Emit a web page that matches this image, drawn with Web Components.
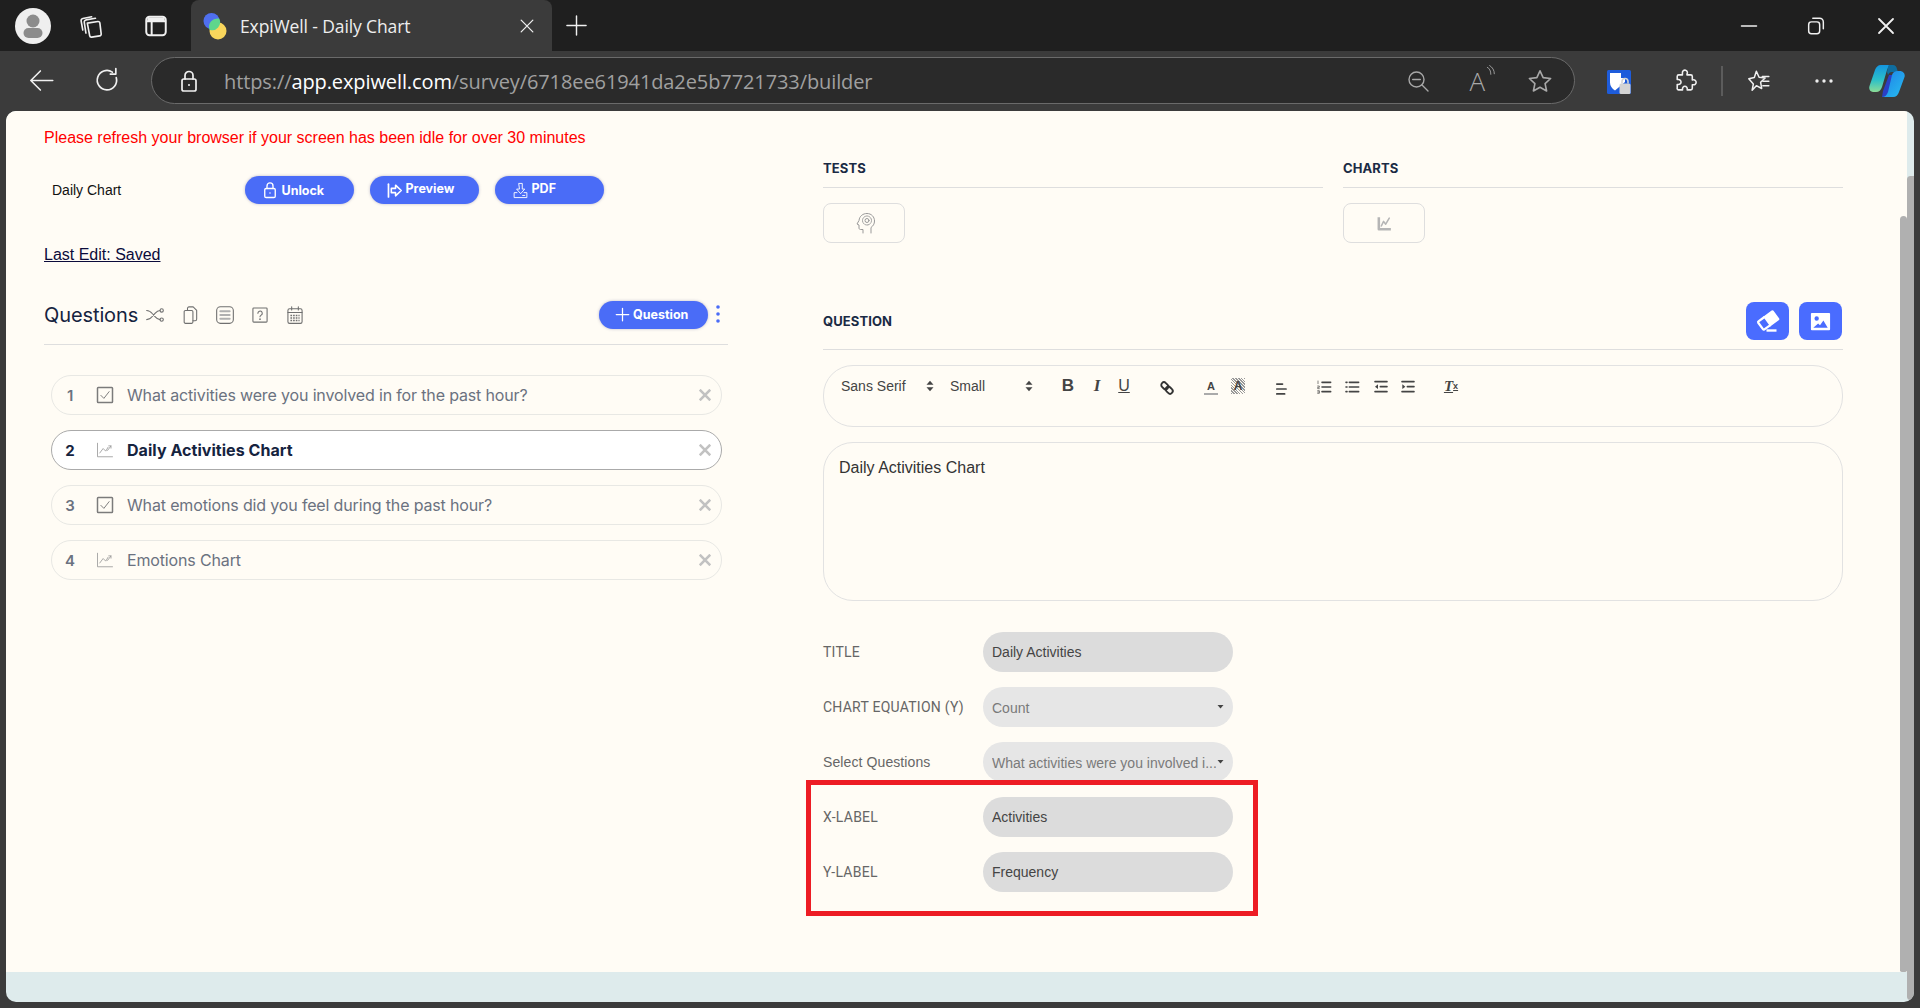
<!DOCTYPE html>
<html lang="en">
<head>
<meta charset="utf-8">
<title>ExpiWell - Daily Chart</title>
<style>
  html, body { margin: 0; height: 1008px; overflow: hidden; background: #3b3b3b; }
  body { display: flex; flex-direction: column; font-family: "Liberation Sans", sans-serif; }
</style>
</head>
<body>
<tab-strip></tab-strip>
<nav-bar></nav-bar>
<page-panel></page-panel>

<script>
const ICONS = {
  workspaces: '<path d="M8.6 9.3 18.4 7.9a1.6 1.6 0 0 1 1.8 1.4l1.2 10a1.6 1.6 0 0 1-1.4 1.8l-7.4 1.2a1.6 1.6 0 0 1-1.8-1.3z"/><path d="M7.3 18.5 5.8 8.6a2 2 0 0 1 1.7-2.3l8.6-1.4"/><path d="M4.4 15.7 2.9 7.4a2 2 0 0 1 1.6-2.3l8.1-1.6"/>',
  sidebar: '<rect x="3" y="3.5" width="18" height="17" rx="3"/><path d="M3.5 7.7h17M8 8v12"/><rect x="4" y="4.2" width="16" height="3.4" rx="1" fill="currentColor" stroke="none"/>',
  close: '<path d="M5 5l14 14M19 5 5 19"/>',
  plus: '<path d="M12 2v20M2 12h20"/>',
  back: '<path d="M22 12H2.500M11 3.500 2.500 12l8.500 8.500"/>',
  refresh: '<path d="M19.800 9.500A8.600 8.600 0 1 1 16.300 4.600"/><path d="M19.400 1.400V6.300H14.500"/>',
  lockopen: '<rect x="5" y="10" width="14" height="12" rx="1.800"/><path d="M8 10V6.500a4 4 0 0 1 8 0V10"/><circle cx="12" cy="16" r="1" fill="currentColor" stroke="none"/>',
  zoomout: '<circle cx="10.500" cy="10.500" r="7.500"/><path d="M6.700 10.500h7.600M16 16l6 6"/>',
  star: '<path d="M12 2.600l2.900 6.300 6.900.8-5.100 4.700 1.400 6.800-6.100-3.400-6.100 3.400 1.400-6.800L2.200 9.700l6.900-.8z"/>',
  puzzle: '<path d="M10 4.600a2.400 2.400 0 1 1 4.400 1.200V6.600H18a1.500 1.500 0 0 1 1.500 1.500v3.300h.6a2.400 2.400 0 1 1 0 4.600h-.6v3.500a1.500 1.500 0 0 1-1.500 1.500h-3.400v-.7a2.300 2.300 0 1 0-4.500 0v.7H6.500A1.500 1.500 0 0 1 5 19v-3.200h.8a2.400 2.400 0 1 0 0-4.700H5V8.100a1.500 1.500 0 0 1 1.500-1.500H10z"/>',
  favstar: '<path d="M10.500 3l2.500 5.500 5.600.7-4.200 3.900 1 5.800-4.900-2.600-3.900 4.200 1.100-5.700L3.500 10l5.100-1.300z"/><path d="M16 7.800h6M16.500 12.200h5.500M16.500 16.400h5.500"/>',
  minimize: '<path d="M3 12h18"/>',
  restore: '<rect x="4" y="7.500" width="12" height="13" rx="3"/><path d="M8.500 3.600h7.500a4 4 0 0 1 4 4V15"/>',
  shuffle: '<path d="M2 6.500c3 0 5 1.500 7 4l3 3.500c2 2.300 4 3.500 6 3.500M2 17.500c3 0 5-1.500 7-4l3-3.500c2-2.300 4-3.500 6-3.500"/><circle cx="20" cy="6.500" r="2"/><circle cx="20" cy="17.500" r="2"/>',
  copy: '<rect x="5" y="6.500" width="10.500" height="15.500" rx="1.500"/><path d="M9 6.500V4a1.800 1.800 0 0 1 1.800-1.800h5L20 6.400V17a1.800 1.800 0 0 1-1.800 1.800h-2.700"/>',
  doclines: '<rect x="2" y="2" width="20" height="20" rx="4.500"/><path d="M6.500 7.500h11M6.500 12h11M6.500 16.500h11" stroke="#b0b0b0" stroke-width="2.600"/>',
  helpbox: '<rect x="3.500" y="3.500" width="17" height="17" rx="1"/><path d="M9.500 10a2.600 2.600 0 1 1 4 2.100c-1 .7-1.500 1-1.500 2"/><circle cx="12" cy="17" r="1" fill="currentColor" stroke="none"/>',
  calendar: '<rect x="3.500" y="4.500" width="17" height="17.500" rx="2"/><path d="M3.500 9h17M8 2v4M16 2v4"/><path d="M6.500 12.500h11M6.500 15.500h11M6.500 18.500h11" stroke-dasharray="2 1.200" stroke-width="1.800" stroke-linecap="butt"/>',
  checkbox: '<rect x="2" y="2" width="20" height="20" rx="1" stroke-width="2"/><path d="M6.500 12.500 10.500 16.500 17.500 7.500" stroke-width="1.300"/>',
  linechart: '<path d="M2 3v18h20" stroke-width="1.100"/><path d="M5 16l4.500-6 3.500 3.500 3-5" stroke-width="1.100"/><path d="M17 6.500l3 0 0 3M20 6.500l-4.500 6" stroke-width="1.100"/>',
  chartfill: '<path d="M4 3v17h17" stroke-width="3.600" stroke-linecap="butt"/><path d="M7.500 15.500l3.200-6.500 3 4 5-8.500" stroke-width="2.200"/>',
  head: '<path d="M9 22v-3.500H6.500c-1 0-1.500-.7-1.500-1.500v-3l-2-1 2-3.500C5.500 5 9 2.500 13 2.500c4.500 0 7.500 3.500 7.500 7.500 0 3-1.500 5-3.500 6.500V22"/><circle cx="13" cy="9.500" r="4.500" stroke-dasharray="1.500 1"/><circle cx="13" cy="9.500" r="2"/>',
  eraser: '<g transform="rotate(-36 12 11)"><path d="M10.500 6.500H3.500a1 1 0 0 0-1 1v8a1 1 0 0 0 1 1h7" stroke-width="2.200" fill="none"/><path d="M10 5.500h10.500a1.500 1.500 0 0 1 1.500 1.500v9a1.500 1.500 0 0 1-1.500 1.500H10z" fill="currentColor" stroke="none"/></g><path d="M10.500 21.500h10" stroke-width="2.400" stroke-linecap="butt"/>',
  image: '<path fill-rule="evenodd" d="M3 3h18a1 1 0 0 1 1 1v16a1 1 0 0 1-1 1H3a1 1 0 0 1-1-1V4a1 1 0 0 1 1-1zM8 6.500a2.300 2.300 0 1 0 0 4.600 2.300 2.300 0 0 0 0-4.600zM4.500 18.500h15l-4.500-7.500-3.500 5-2-2z" fill="currentColor" stroke="none"/>',
  shareto: '<path d="M3.500 3v18" stroke-width="2.400"/><path d="M7.500 9h6V4.500L21.500 12l-8 7.500V15h-6z" stroke-width="2.200"/>',
  download: '<path d="M10 2h4.500v8H18l-5.800 6.500L6.500 10H10z"/><path d="M7 15H3v7h18v-7h-4M15 19h3"/>',
  link: '<g transform="rotate(-45 12 12)"><rect x="8" y="1.500" width="8" height="11.500" rx="4" stroke-width="2.800"/><rect x="8" y="11" width="8" height="11.500" rx="4" stroke-width="2.800"/></g>',
  alignleft: '<path d="M4 5h8M4 12h13M4 19h11" stroke-width="2.400"/>',
  olist: '<path d="M9 5h13M9 12h13M9 19h13" stroke-width="2.400"/><path d="M3 3v4M2.500 10.500h2.500v2h-2.500v2h2.500M2.500 17.500h2.500v4h-2.500M2.500 19.500h2.500" stroke-width="1"/>',
  ulist: '<path d="M8 5h14M8 12h14M8 19h14M3 5h1.500M3 12h1.500M3 19h1.500" stroke-width="2.400"/>',
  outdent: '<path d="M3 4h18M11 11.500h10M3 19h18" stroke-width="2.400"/><path d="M3 11.500 7.500 8v7z" fill="currentColor" stroke="none"/>',
  indent: '<path d="M3 4h18M11 11.500h10M3 19h18" stroke-width="2.400"/><path d="M8 11.500 3.500 8v7z" fill="currentColor" stroke="none"/>',
  updown: '<path d="M12 3 18 10H6zM12 21 6 14h12z" fill="currentColor" stroke="none"/>',
  caret: '<path d="M4 8h16l-8 9z" fill="currentColor" stroke="none"/>',
  waves: '<path d="M4 4c4 2 6 6 6 12M8 1c5 3 8 8 8 14"/>'
};

class UiIcon extends HTMLElement {
  connectedCallback() {
    const size = this.getAttribute('size') || 24;
    const stroke = this.getAttribute('stroke') || 1.6;
    this.attachShadow({ mode: 'open' }).innerHTML = `
      <style>:host { display: inline-flex; width: ${size}px; height: ${size}px; flex: none; } svg { width: 100%; height: 100%; display: block; overflow: visible; }</style>
      <svg viewBox="0 0 24 24" fill="none" stroke="currentColor" stroke-width="${stroke}" stroke-linecap="round" stroke-linejoin="round">${ICONS[this.getAttribute('name')]}</svg>`;
  }
}

class TabStrip extends HTMLElement {
  connectedCallback() {
    this.attachShadow({ mode: 'open' }).innerHTML = `
      <style>
        :host { display: flex; align-items: center; height: 51px; flex: none; background: #1f1f1f; color: #f0f0f0; }
        .avatar { width: 36px; height: 36px; margin-left: 15px; }
        .workspace { margin-left: 27px; }
        .side { margin-left: 39px; }
        .tab { display: flex; align-items: center; align-self: flex-end; box-sizing: border-box; width: 361px; height: 51px; margin-left: 22px; background: #3b3b3b; border-radius: 8px 8px 0 0; padding-left: 12px; }
        .fav { width: 26px; height: 30px; }
        .title { margin-left: 11px; font: 17.5px "Open Sans", sans-serif; letter-spacing: -.12px; color: #eee; white-space: nowrap; flex: 1; }
        .tab ui-icon { margin-right: 15px; }
        .new { margin-left: 13px; }
        .spacer { flex: 1; }
        .win { margin-left: 47px; }
        .win.first { margin: 0 -1px 0 0; }
      </style>
      <svg class="avatar" viewBox="0 0 36 36"><circle cx="18" cy="18" r="18" fill="#efefef"/><circle cx="18" cy="13" r="6.500" fill="#8c8c8c"/><rect x="8.500" y="20" width="19" height="10" rx="5" fill="#8c8c8c"/></svg>
      <ui-icon class="workspace" name="workspaces" size="26" stroke="1.500"></ui-icon>
      <ui-icon class="side" name="sidebar" size="26" stroke="1.800"></ui-icon>
      <div class="tab">
        <svg class="fav" viewBox="0 0 26 30"><circle cx="8.500" cy="10" r="8" fill="#4f6fee"/><circle cx="15" cy="20" r="8.500" fill="#f9d65c"/><path d="M6.500 17.800a8 8 0 0 0 9.700-11.200A8.500 8.500 0 0 0 6.500 17.800z" fill="#5fd68c" transform="translate(0 1)"/></svg>
        <span class="title">ExpiWell - Daily Chart</span>
        <ui-icon name="close" size="20" stroke="1.500"></ui-icon>
      </div>
      <ui-icon class="new" name="plus" size="23" stroke="1.500"></ui-icon>
      <span class="spacer"></span>
      <ui-icon class="win first" name="minimize" size="20" stroke="1.800"></ui-icon>
      <ui-icon class="win" name="restore" size="22" stroke="1.600"></ui-icon>
      <ui-icon class="win" name="close" size="24" stroke="1.800" style="margin-right:22px"></ui-icon>`;
  }
}

class NavBar extends HTMLElement {
  connectedCallback() {
    this.attachShadow({ mode: 'open' }).innerHTML = `
      <style>
        :host { display: flex; align-items: center; height: 60px; flex: none; background: #3b3b3b; color: #f0f0f0; box-sizing: border-box; padding-bottom: 1px; }
        .back { margin-left: 28px; }
        .reload { margin-left: 39px; }
        .pill { display: flex; align-items: center; box-sizing: border-box; width: 1424px; height: 47px; margin-left: 30px; border: 1.5px solid #6a6a6a; border-radius: 24px; background: #2a2a2a; }
        .lock { margin-left: 25px; }
        .url { margin: 1px 0 0 23px; font: 20px "Open Sans", sans-serif; color: #a0a0a0; letter-spacing: -.1px; white-space: nowrap; flex: 1; }
        .url b { font-weight: 400; color: #fff; }
        .dim { color: #a8a8a8; }
        .zoom { margin-right: 39.5px; }
        .aloud { position: relative; display: inline-flex; align-items: center; width: 26px; height: 26px; margin-right: 31.5px; font: 300 26px/26px "Open Sans", sans-serif; }
        .aloud ui-icon { position: absolute; left: 15px; top: -3px; }
        .star { margin-right: 21px; }
        .vault { width: 24px; height: 24px; margin: 2px 0 0 32px; }
        .puzzle { margin-left: 41px; }
        .sep { width: 2px; height: 30px; background: #5c5c5c; margin-left: 24px; }
        .favs { margin-left: 22px; }
        .dots { margin-left: 43px; }
        .pilot { width: 36px; height: 32px; margin: 1px 0 0 35px; }
      </style>
      <ui-icon class="back" name="back" size="27" stroke="1.400"></ui-icon>
      <ui-icon class="reload" name="refresh" size="27" stroke="1.500"></ui-icon>
      <div class="pill">
        <ui-icon class="lock" name="lockopen" size="24" stroke="1.700"></ui-icon>
        <span class="url">https://<b>app.expiwell.com</b>/survey/6718ee61941da2e5b7721733/builder</span>
        <ui-icon class="dim zoom" name="zoomout" size="24" stroke="1.400"></ui-icon>
        <span class="dim aloud">A<ui-icon name="waves" size="14" stroke="1.500"></ui-icon></span>
        <ui-icon class="dim star" name="star" size="26" stroke="1.500"></ui-icon>
      </div>
      <svg class="vault" viewBox="0 0 24 24"><rect width="24" height="24" rx="1.500" fill="#1e5cdb"/><path d="M3 3h11v5h4v4L8 20.500C5 18.500 3 16 3 12.500z" fill="#fff"/><rect x="12.500" y="13.500" width="11" height="10.500" rx="1.500" fill="#d4d4d4"/><path d="M15 13.500v-2a3 3 0 0 1 6 0v2" fill="none" stroke="#d4d4d4" stroke-width="1.600"/></svg>
      <ui-icon class="puzzle" name="puzzle" size="25" stroke="1.500"></ui-icon>
      <span class="sep"></span>
      <ui-icon class="favs" name="favstar" size="26" stroke="1.400"></ui-icon>
      <svg class="dots" width="20" height="6" viewBox="0 0 20 6" fill="#eee"><circle cx="3" cy="3" r="1.700"/><circle cx="10" cy="3" r="1.700"/><circle cx="17" cy="3" r="1.700"/></svg>
      <svg class="pilot" viewBox="0 0 36 32">
        <defs>
          <linearGradient id="a" x1="0" y1="0" x2="0" y2="1"><stop offset="0" stop-color="#1496e0"/><stop offset=".55" stop-color="#2cc0c8"/><stop offset="1" stop-color="#8bdc96"/></linearGradient>
          <linearGradient id="b" x1="0" y1="0" x2="1" y2="1"><stop offset="0" stop-color="#1f7fe6"/><stop offset="1" stop-color="#27bdf0"/></linearGradient>
        </defs>
        <path d="M14 26l6-16h8l-5 22H13z" fill="#2a3fc4"/>
        <path d="M12 0h12c-3 0-5 2-6 5l-5 17c-1 3-3 5-6 5H4C1 27-.500 24 .500 21L6 5C7 2 9 0 12 0z" fill="url(#a)"/>
        <path d="M20 0h4c2 0 3.500 1.500 4 4l1 3h-6c-2 0-3 1-4 3l-1-3c1-4 1-7 2-7z" fill="#0f6d9f"/>
        <path d="M24 32H13c3 0 5-2 6-5l4-17c1-3 3-4 6-4h2c3 0 5.500 3 4.500 6L30 27c-1 3-3 5-6 5z" fill="url(#b)"/>
      </svg>`;
  }
}

class PagePanel extends HTMLElement {
  connectedCallback() {
    this.attachShadow({ mode: 'open' }).innerHTML = `
      <style>
        :host { display: flex; height: 891px; margin: 0 6px; background: #deebec; border-radius: 10px; overflow: hidden; position: relative; font-family: "Liberation Sans", sans-serif; }
        .inner { display: flex; flex-direction: column; width: 1901px; }
        .main { display: flex; height: 861px; background: #fffcf5; }
        .content { display: flex; flex: 1; box-sizing: border-box; padding-left: 38px; }
        .track { width: 7px; padding-top: 105px; box-sizing: border-box; }
        .thumb { height: 100%; background: #b0b0b0; border-radius: 4px 4px 2px 2px; }
        .outer { width: 7px; padding-top: 65px; box-sizing: border-box; }
        .outer .thumb { height: 824px; border-radius: 4px 0 4px 4px; }
        .left { width: 684px; }
        .right { width: 1020px; margin-left: 95px; }
      </style>
      <div class="inner">
        <div class="main">
          <div class="content">
            <div class="left"><builder-head></builder-head><question-list></question-list></div>
            <div class="right"><side-tools></side-tools><question-editor></question-editor></div>
          </div>
          <div class="track"><div class="thumb"></div></div>
        </div>
      </div>
      <div class="outer"><div class="thumb"></div></div>`;
  }
}

class PillButton extends HTMLElement {
  connectedCallback() {
    const up = this.hasAttribute('up') ? 'margin-top:-3px;' : '';
    this.attachShadow({ mode: 'open' }).innerHTML = `
      <style>
        :host { display: inline-flex; align-items: center; box-sizing: border-box; height: 28px; width: 109px; padding-left: ${this.getAttribute('pad') || 17}px; gap: 3px; background: #4a6cf7; color: #fff; border-radius: 14px; box-shadow: 0 0 3px rgba(60, 60, 120, .35); font: 700 12.5px Inter, sans-serif; }
        span { ${up} }
      </style>
      <ui-icon name="${this.getAttribute('icon')}" size="${this.getAttribute('size') || 18}" stroke="${this.getAttribute('stroke') || 1.8}"></ui-icon>
      <span><slot></slot></span>`;
  }
}

class BuilderHead extends HTMLElement {
  connectedCallback() {
    this.attachShadow({ mode: 'open' }).innerHTML = `
      <style>
        :host { display: block; padding-top: 17px; }
        .notice { color: #f00; font-size: 16px; line-height: 20px; }
        .actions { display: flex; align-items: center; margin-top: 28px; height: 28px; padding-left: 8px; font-size: 14px; color: #111; }
        .name { width: 192.5px; }
        pill-button + pill-button { margin-left: 16px; }
        .saved { margin-top: 41px; line-height: 20px; font-size: 16px; color: #0b0b3b; text-decoration: underline; }
        .qhead { display: flex; align-items: center; margin-top: 35px; height: 29px; padding-bottom: 15px; border-bottom: 1px solid #dedede; color: #707070; }
        .qhead h2 { margin: 0; font: 400 20px Inter, sans-serif; color: #15233f; letter-spacing: -.1px; width: 101px; white-space: nowrap; }
        .qhead ui-icon { margin-right: 15px; }
        .qhead .spring { flex: 1; }
        .kebab { margin: -2px 8px 0 8px; width: 4px; }
      </style>
      <div class="notice">Please refresh your browser if your screen has been idle for over 30 minutes</div>
      <div class="actions">
        <span class="name">Daily Chart</span>
        <pill-button icon="lockopen" pad="16">Unlock</pill-button>
        <pill-button icon="shareto" pad="16" size="17" up>Preview</pill-button>
        <pill-button icon="download" pad="17" size="17" stroke="1.300" up>PDF</pill-button>
      </div>
      <div class="saved">Last Edit: Saved</div>
      <div class="qhead">
        <h2>Questions</h2>
        <ui-icon name="shuffle" size="20" stroke="1.300"></ui-icon>
        <ui-icon name="copy" size="20" stroke="1.300"></ui-icon>
        <ui-icon name="doclines" size="20" stroke="1.300"></ui-icon>
        <ui-icon name="helpbox" size="20" stroke="1.300"></ui-icon>
        <ui-icon name="calendar" size="20" stroke="1.300"></ui-icon>
        <span class="spring"></span>
        <pill-button icon="plus" pad="16" size="15" stroke="2">Question</pill-button>
        <svg class="kebab" viewBox="0 0 4 18" height="18" fill="#4a6cf7"><circle cx="2" cy="2" r="1.800"/><circle cx="2" cy="9" r="1.800"/><circle cx="2" cy="16" r="1.800"/></svg>
      </div>`;
  }
}

class QuestionRow extends HTMLElement {
  connectedCallback() {
    const active = this.hasAttribute('active');
    this.attachShadow({ mode: 'open' }).innerHTML = `
      <style>
        :host { display: flex; align-items: center; box-sizing: border-box; height: 40px; border: 1px solid ${active ? '#aaa' : '#e8e8e4'}; border-radius: 20px; background: ${active ? '#fff' : 'transparent'}; font: ${active ? 700 : 400} 16px Inter, sans-serif; color: ${active ? '#15233f' : '#6b7280'}; letter-spacing: ${active ? '.05px' : '-.15px'}; }
        .num { width: 36px; text-align: center; font-weight: ${active ? 700 : 600}; font-size: 15px; }
        ui-icon { margin-left: 7.5px; color: ${this.getAttribute('icon') === 'checkbox' ? '#7b7b7b' : '#999'}; }
        .text { flex: 1; margin-left: 13.5px; white-space: nowrap; }
        svg.x { margin-right: 10px; width: 12px; height: 12px; }
      </style>
      <span class="num">${this.getAttribute('num')}</span>
      <ui-icon name="${this.getAttribute('icon')}" size="18" stroke="1.300"></ui-icon>
      <span class="text"><slot></slot></span>
      <svg class="x" viewBox="0 0 11 11" stroke="#c2c2c2" stroke-width="2.400" stroke-linecap="square"><path d="M1.500 1.500l8 8M9.500 1.500l-8 8"/></svg>`;
  }
}

class QuestionList extends HTMLElement {
  connectedCallback() {
    this.attachShadow({ mode: 'open' }).innerHTML = `
      <style>
        :host { display: flex; flex-direction: column; gap: 15px; margin: 30px 6px 0 7px; }
      </style>
      <question-row num="1" icon="checkbox">What activities were you involved in for the past hour?</question-row>
      <question-row num="2" icon="linechart" active>Daily Activities Chart</question-row>
      <question-row num="3" icon="checkbox">What emotions did you feel during the past hour?</question-row>
      <question-row num="4" icon="linechart">Emotions Chart</question-row>`;
  }
}

class SideTools extends HTMLElement {
  connectedCallback() {
    this.attachShadow({ mode: 'open' }).innerHTML = `
      <style>
        :host { display: flex; gap: 20px; padding-top: 49px; }
        .col { flex: 1; }
        h3 { margin: 0; font: 700 13px/16px Inter, sans-serif; color: #1a2a44; padding-bottom: 11px; border-bottom: 1px solid #dedede; letter-spacing: .1px; }
        .tool { display: flex; align-items: center; justify-content: center; width: 82px; height: 40px; margin-top: 15px; box-sizing: border-box; border: 1px solid #dedede; border-radius: 8px; color: #b5b5b5; }
        .head { color: #999; padding-left: 4px; }
      </style>
      <div class="col"><h3>TESTS</h3><div class="tool head"><ui-icon name="head" size="24" stroke="1"></ui-icon></div></div>
      <div class="col"><h3>CHARTS</h3><div class="tool"><ui-icon name="chartfill" size="17" stroke="2.500"></ui-icon></div></div>`;
  }
}

class EditorToolbar extends HTMLElement {
  connectedCallback() {
    this.attachShadow({ mode: 'open' }).innerHTML = `
      <style>
        :host { display: flex; align-items: flex-start; box-sizing: border-box; height: 62px; padding: 10px 0 0 17px; border: 1px solid #e2e2e2; border-radius: 30px; color: #444; font-size: 14px; }
        .item { display: flex; align-items: center; justify-content: center; height: 20px; flex: none; }
        .sel { justify-content: flex-start; color: #444; white-space: nowrap; }
        .b { font: 700 17px "Liberation Sans", sans-serif; }
        .i { font: italic 700 17px "Liberation Serif", serif; }
        .u { font: 400 16px "Liberation Sans", sans-serif; text-decoration: underline; }
        .color { font: 700 11px "Liberation Sans", sans-serif; border-bottom: 2px solid #aaa; height: 15px; width: 14px; align-self: flex-start; margin-top: 2px; }
        .bg { font: 700 12px "Liberation Sans", sans-serif; width: 14px; height: 16px; margin-top: 2px; background: repeating-linear-gradient(45deg, #999 0 1px, transparent 1px 2px); }
        .clean { font: italic 700 15px "Liberation Serif", serif; text-decoration: underline; }
        .clean sub { font: 700 9px "Liberation Sans", sans-serif; text-decoration: none; vertical-align: -2px; }
      </style>
      <span class="item sel" style="width:81px">Sans Serif</span>
      <ui-icon class="item" name="updown" size="14" style="margin-left:1px;height:20px"></ui-icon>
      <span class="item sel" style="width:72px;margin-left:13px">Small</span>
      <ui-icon class="item" name="updown" size="14" style="height:20px"></ui-icon>
      <span class="item b" style="width:20px;margin-left:22px">B</span>
      <span class="item i" style="width:20px;margin-left:9px">I</span>
      <span class="item u" style="width:20px;margin-left:7px">U</span>
      <ui-icon class="item" name="link" size="16" stroke="2" style="margin-left:25px;margin-top:2px;color:#333"></ui-icon>
      <span class="item color" style="margin-left:29px">A</span>
      <span class="item bg" style="margin-left:13px">A</span>
      <ui-icon class="item" name="alignleft" size="17" stroke="2" style="margin-left:29px;margin-top:3px"></ui-icon>
      <ui-icon class="item" name="olist" size="16" stroke="2" style="margin-left:25px;margin-top:1px"></ui-icon>
      <ui-icon class="item" name="ulist" size="16" stroke="2" style="margin-left:12px;margin-top:1px"></ui-icon>
      <ui-icon class="item" name="outdent" size="16" stroke="2" style="margin-left:13px;margin-top:1px"></ui-icon>
      <ui-icon class="item" name="indent" size="16" stroke="2" style="margin-left:11px;margin-top:1px"></ui-icon>
      <span class="item clean" style="width:20px;margin-left:25px">T<sub>x</sub></span>`;
  }
}

class FormRow extends HTMLElement {
  connectedCallback() {
    const select = this.hasAttribute('select');
    const caps = this.getAttribute('label') === this.getAttribute('label').toUpperCase();
    this.attachShadow({ mode: 'open' }).innerHTML = `
      <style>
        :host { display: flex; align-items: center; height: 40px; font-family: "Liberation Sans", sans-serif; font-size: 14px; }
        label { width: 160px; color: #666; white-space: nowrap; ${caps ? 'font-family: Roboto, sans-serif; letter-spacing: .25px;' : 'letter-spacing: .1px;'} }
        .field { display: flex; align-items: center; box-sizing: border-box; width: 250px; height: 40px; padding: ${select ? 2 : 0}px 8px 0 9px; border-radius: 20px; background: ${select ? '#e6e6e6' : '#dcdcdc'}; color: ${select ? '#7a7a7a' : '#444'}; }
        .val { flex: 1; white-space: nowrap; overflow: hidden; }
        ui-icon { color: #444; margin-top: -3px; }
      </style>
      <label>${this.getAttribute('label')}</label>
      <div class="field"><span class="val"><slot></slot></span>${select ? '<ui-icon name="caret" size="9"></ui-icon>' : ''}</div>`;
  }
}

class QuestionEditor extends HTMLElement {
  connectedCallback() {
    this.attachShadow({ mode: 'open' }).innerHTML = `
      <style>
        :host { display: block; position: relative; margin-top: 59px; }
        .head { display: flex; align-items: center; justify-content: space-between; height: 38px; padding-bottom: 9px; border-bottom: 1px solid #dedede; }
        h3 { margin: 0; font: 700 13px Inter, sans-serif; color: #1a2a44; letter-spacing: .1px; }
        .btns { display: flex; gap: 10px; margin-right: 1px; }
        .sq { display: flex; align-items: center; justify-content: center; width: 43px; height: 38px; background: #4a6cff; border-radius: 8px; color: #fff; }
        editor-toolbar { margin-top: 15px; }
        .body { box-sizing: border-box; height: 159px; margin-top: 15px; padding: 15px 15px 0; border: 1px solid #e2e2e2; border-radius: 30px; font-size: 16px; line-height: 20px; color: #333; }
        .form { display: flex; flex-direction: column; gap: 15px; margin-top: 31px; }
        .mark { position: absolute; left: -17px; top: 478px; box-sizing: border-box; width: 452px; height: 136px; border: 5px solid #ed1c24; pointer-events: none; }
      </style>
      <div class="head">
        <h3>QUESTION</h3>
        <div class="btns">
          <div class="sq"><ui-icon name="eraser" size="24"></ui-icon></div>
          <div class="sq"><ui-icon name="image" size="23"></ui-icon></div>
        </div>
      </div>
      <editor-toolbar></editor-toolbar>
      <div class="body">Daily Activities Chart</div>
      <div class="form">
        <form-row label="TITLE">Daily Activities</form-row>
        <form-row label="CHART EQUATION (Y)" select>Count</form-row>
        <form-row label="Select Questions" select>What activities were you involved i...</form-row>
        <form-row label="X-LABEL">Activities</form-row>
        <form-row label="Y-LABEL">Frequency</form-row>
      </div>
      <div class="mark"></div>`;
  }
}

customElements.define('ui-icon', UiIcon);
customElements.define('pill-button', PillButton);
customElements.define('question-row', QuestionRow);
customElements.define('question-list', QuestionList);
customElements.define('builder-head', BuilderHead);
customElements.define('side-tools', SideTools);
customElements.define('editor-toolbar', EditorToolbar);
customElements.define('form-row', FormRow);
customElements.define('question-editor', QuestionEditor);
customElements.define('tab-strip', TabStrip);
customElements.define('nav-bar', NavBar);
customElements.define('page-panel', PagePanel);
</script>
</body>
</html>
